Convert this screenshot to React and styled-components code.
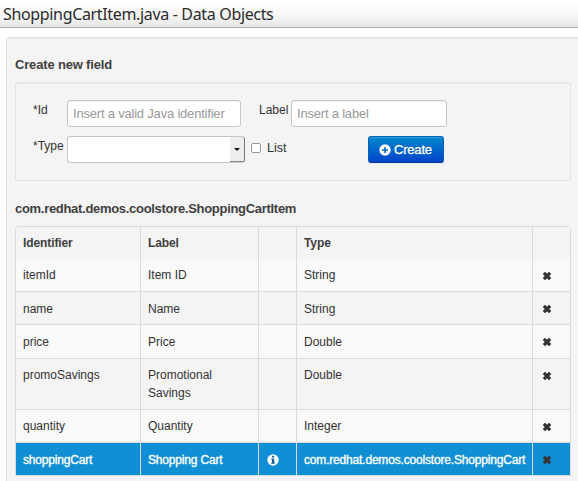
import React from "react";
import styled, { createGlobalStyle, css } from "styled-components";

const Global = createGlobalStyle`
  * { box-sizing: border-box; }
  html, body { margin: 0; background: #fff; overflow: hidden; }
  body { font-family: "Liberation Sans", Arial, sans-serif; font-size: 12px; color: #333; }
`;

const Page = styled.div`
  width: 578px;
  height: 481px;
  overflow: hidden;
`;

const TitleBar = styled.header`
  height: 28px;
  padding-left: 3px;
  background: linear-gradient(#fff 0%, #f8f8f8 50%, #e6e6e6 100%);
  border-bottom: 1px solid #adadad;
  font: 16px/29px "Noto Sans", sans-serif;
  letter-spacing: -0.34px;
  color: #2b2b2b;
  white-space: nowrap;
`;

const Panel = styled.main`
  width: 600px;
  height: 500px;
  margin: 9px 0 0 6px;
  padding: 17px 0 0 8px;
  background: #f4f4f4;
  border: 1px solid #e1e1e1;
  border-radius: 3px;
  box-shadow: inset 0 1px 1px rgba(0, 0, 0, 0.04);
`;

const Heading = styled.h2`
  margin: 0;
  height: 27px;
  font-size: 13px;
  line-height: 20px;
  font-weight: bold;
  letter-spacing: ${(p) => p.$spacing || 0}px;
  color: #404040;
`;

const Well = styled.section`
  width: 556px;
  height: 99px;
  margin-bottom: 18px;
  padding: 17px 0 0 17px;
  border: 1px solid #e1e1e1;
  border-radius: 3px;
  box-shadow: inset 0 1px 1px rgba(0, 0, 0, 0.04);
`;

const FormRow = styled.div`
  display: flex;
  align-items: flex-start;
  height: 36px;
`;

const FieldLabel = styled.label`
  width: ${(p) => p.$width}px;
  margin-left: ${(p) => p.$gap || 0}px;
  line-height: 20px;
  white-space: nowrap;
`;

const TextInput = styled.input`
  width: ${(p) => p.$width}px;
  height: 27px;
  padding: 0 5px;
  border: 1px solid #c6c6c6;
  border-radius: 3px;
  background: #fff;
  box-shadow: inset 0 1px 1px rgba(0, 0, 0, 0.06);
  font: 13px "Liberation Sans", Arial, sans-serif;
  letter-spacing: -0.2px;
  outline: none;
  &::placeholder { color: #999; opacity: 1; }
`;

const Combo = styled.div`
  display: flex;
  justify-content: flex-end;
  width: 178px;
  height: 27px;
  border: 1px solid #c6c6c6;
  border-right: 0;
  border-radius: 3px;
  background: #fff;
`;

const ComboArrow = styled.span`
  display: flex;
  align-items: center;
  justify-content: center;
  width: 15px;
  height: 25px;
  background: #eee;
  border-right: 1px solid #777;
  border-bottom: 1px solid #888;
  border-radius: 0 2px 2px 0;
`;

const Check = styled.input`
  appearance: none;
  width: 10px;
  height: 10px;
  margin: 7px 6px 0 6px;
  border: 1px solid #999;
  border-radius: 2px;
  background: #fff;
`;

const CheckLabel = styled.label`
  width: 101px;
  padding-top: 2px;
  font-size: 12.5px;
  line-height: 20px;
`;

const CreateButton = styled.button`
  display: flex;
  align-items: center;
  gap: 3px;
  width: 76px;
  height: 27px;
  padding: 0 0 0 10px;
  border: 1px solid #0660b4;
  border-bottom-color: #003a9c;
  border-radius: 3px;
  background: linear-gradient(#0088cc, #0044cc);
  box-shadow: inset 0 1px 0 rgba(255, 255, 255, 0.18), 0 1px 1px rgba(0, 0, 0, 0.06);
  color: #fff;
  font: 13px "Liberation Sans", Arial, sans-serif;
  letter-spacing: -0.2px;
  -webkit-text-stroke: 0.3px #fff;
  text-shadow: 0 -1px 0 rgba(0, 0, 0, 0.25);
`;

const Table = styled.div`
  width: 556px;
  border: 1px solid #dadada;
  border-radius: 4px 4px 0 0;
  overflow: hidden;
`;

const Cell = styled.div`
  padding: 7px 0 0 7px;
  line-height: 18px;
  border-left: 1px solid #dadada;
  white-space: nowrap;
  &:first-child { border-left: 0; }
`;

const IconCell = styled(Cell)`
  &&& {
    padding: ${(p) => p.$top}px 0 0 ${(p) => p.$left}px;
    line-height: 0;
  }
`;

const Row = styled.div`
  display: grid;
  grid-template-columns: 124px 118px 38px 236px 38px;
  height: ${(p) => p.$height}px;
  border-bottom: 1px solid #dadada;
  background: ${(p) => (p.$striped ? "#f9f9f9" : "#f4f4f4")};
  &:last-child { border-bottom: 0; }
  ${(p) => p.$low && css`
    ${Cell} { padding-top: 8px; }
  `}
  ${(p) => p.$header && css`
    border-bottom: 0;
    font-weight: bold;
    letter-spacing: -0.1px;
    color: #404040;
  `}
  ${(p) => p.$selected && css`
    background: #108fd4;
    color: #fff;
    letter-spacing: -0.18px;
    -webkit-text-stroke: 0.35px #fff;
  `}
`;

const PlusIcon = () => (
  <svg width="12" height="12" viewBox="0 0 12 12">
    <circle cx="6" cy="6" r="5.7" fill="#fff" />
    <path d="M6 3v6M3 6h6" stroke="#0869cc" strokeWidth="1.6" />
  </svg>
);

const RemoveIcon = () => (
  <svg width="10" height="10" viewBox="0 0 10 10">
    <path d="M1.9 1.9L8.1 8.1M8.1 1.9L1.9 8.1" stroke="#333" strokeWidth="3.3" />
  </svg>
);

const InfoIcon = () => (
  <svg width="12" height="12" viewBox="0 0 12 12">
    <circle cx="6" cy="6" r="5.7" fill="#fff" />
    <path d="M5 1.8h2.2v1.7H5zM4.3 4.5h2.9v4h.8v1.3H4.2V8.5H5V5.8h-.7z" fill="#12639c" />
  </svg>
);

const fields = [
  { id: "itemId", label: "Item ID", type: "String", height: 33 },
  { id: "name", label: "Name", type: "String", height: 33, low: true },
  { id: "price", label: "Price", type: "Double", height: 34, low: true },
  { id: "promoSavings", label: <>Promotional<br />Savings</>, type: "Double", height: 51 },
  { id: "quantity", label: "Quantity", type: "Integer", height: 33 },
  { id: "shoppingCart", label: "Shopping Cart", type: "com.redhat.demos.coolstore.ShoppingCart", height: 32, low: true, selected: true },
];

export default function App() {
  return (
    <Page>
      <Global />
      <TitleBar>ShoppingCartItem.java - Data Objects</TitleBar>
      <Panel>
        <Heading $spacing={-0.17}>Create new field</Heading>
        <Well>
          <FormRow>
            <FieldLabel $width={34}>*Id</FieldLabel>
            <TextInput $width={174} placeholder="Insert a valid Java identifier" />
            <FieldLabel $width={32} $gap={18}>Label</FieldLabel>
            <TextInput $width={156} placeholder="Insert a label" />
          </FormRow>
          <FormRow>
            <FieldLabel $width={34}>*Type</FieldLabel>
            <Combo>
              <ComboArrow>
                <svg width="6" height="3" viewBox="0 0 6 3"><path d="M0 0h6L3 3z" fill="#111" /></svg>
              </ComboArrow>
            </Combo>
            <Check type="checkbox" />
            <CheckLabel>List</CheckLabel>
            <CreateButton><PlusIcon />Create</CreateButton>
          </FormRow>
        </Well>
        <Heading $spacing={-0.3}>com.redhat.demos.coolstore.ShoppingCartItem</Heading>
        <Table>
          <Row $height={32} $header>
            <Cell>Identifier</Cell>
            <Cell>Label</Cell>
            <Cell />
            <Cell>Type</Cell>
            <Cell />
          </Row>
          {fields.map((f, i) => (
            <Row key={f.id} $height={f.height} $striped={i % 2 === 0} $selected={f.selected} $low={f.low}>
              <Cell>{f.id}</Cell>
              <Cell>{f.label}</Cell>
              <IconCell $top={11} $left={8}>{f.selected && <InfoIcon />}</IconCell>
              <Cell>{f.type}</Cell>
              <IconCell $top={12} $left={9}><RemoveIcon /></IconCell>
            </Row>
          ))}
        </Table>
      </Panel>
    </Page>
  );
}
